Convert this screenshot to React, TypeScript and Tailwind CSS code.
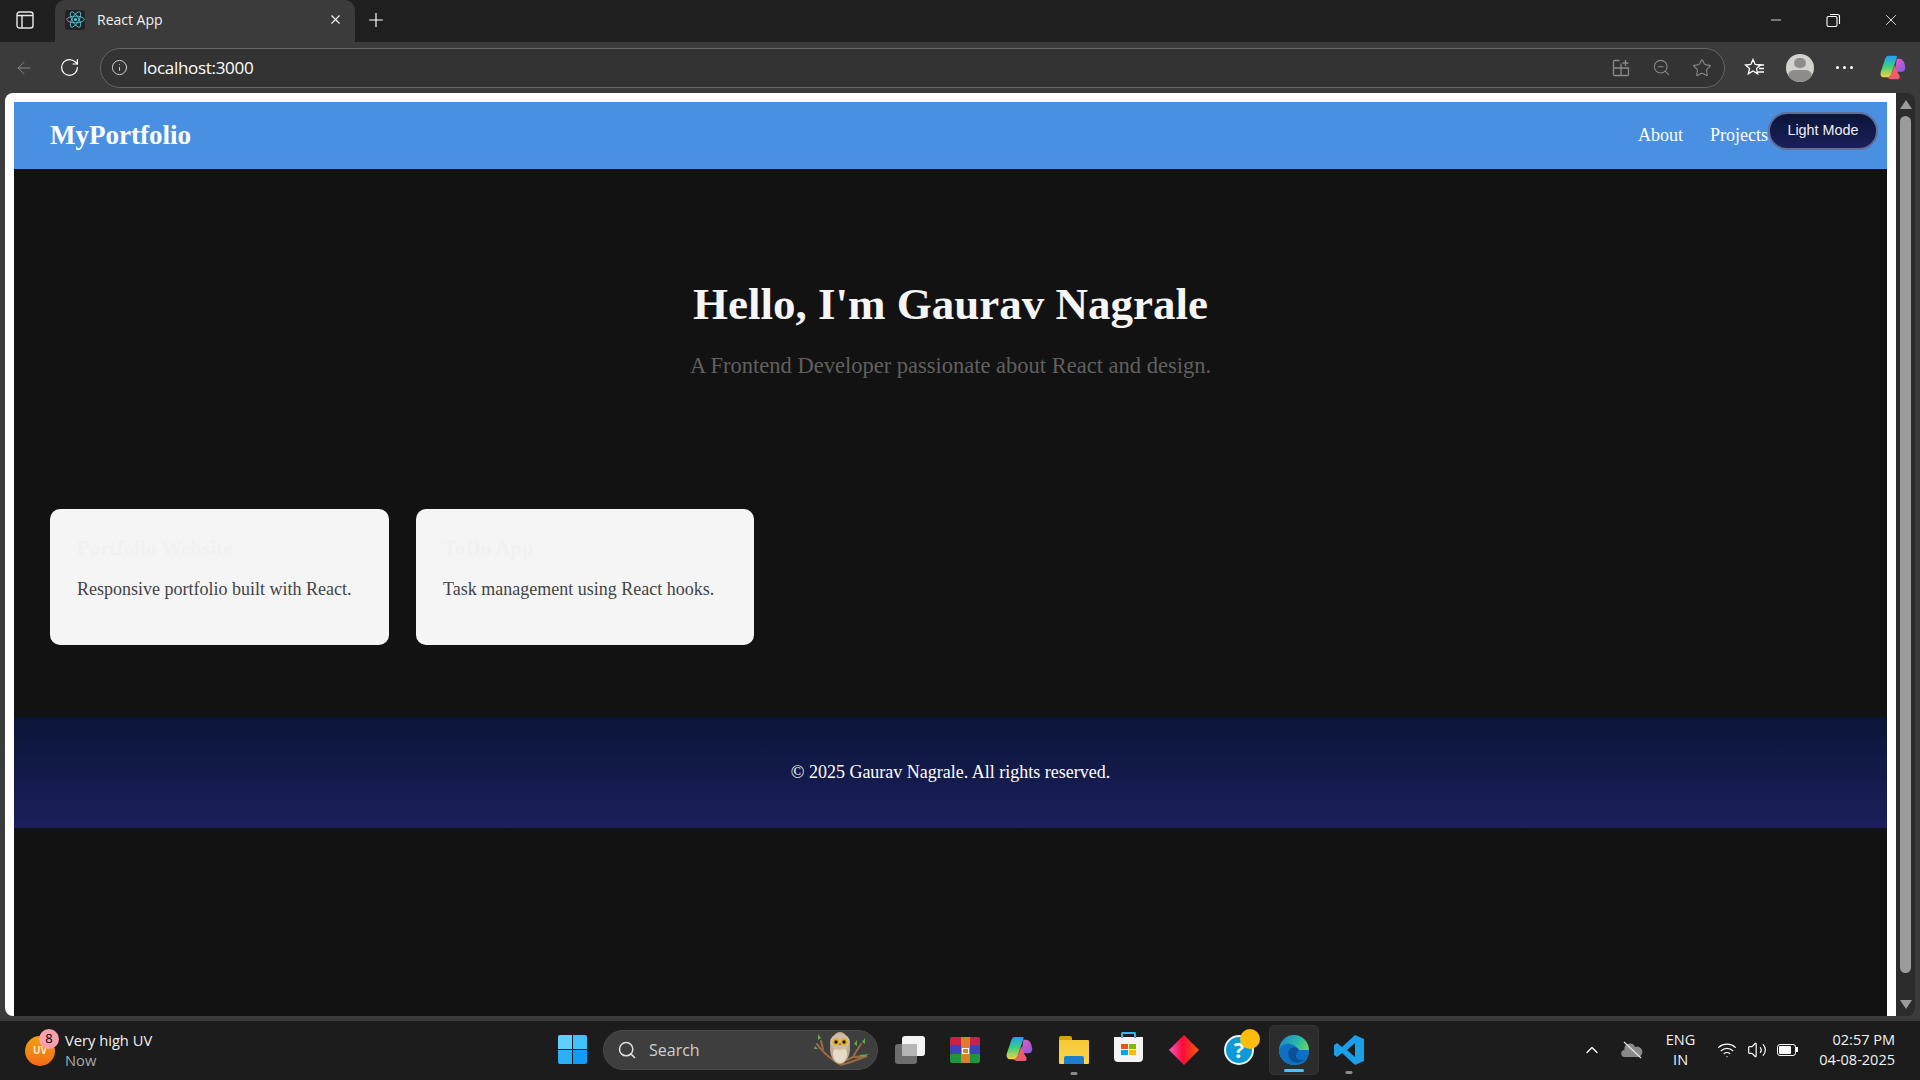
import React from "react";
import { Plus, X, ArrowLeft, RotateCw, Info, ZoomOut, Star, Minus, Search, ChevronUp, Wifi, Volume2 } from "lucide-react";

const ReactLogo = () => (
  <div className="flex items-center justify-center rounded-[3px] bg-[#222222] w-[20px] h-[20px] shrink-0">
    <svg width="19" height="19" viewBox="-12 -12 24 24" fill="none" stroke="#58c4dc" strokeWidth="1.1">
      <circle r="2" fill="#58c4dc" stroke="none" />
      <ellipse rx="11" ry="4.2" />
      <ellipse rx="11" ry="4.2" transform="rotate(60)" />
      <ellipse rx="11" ry="4.2" transform="rotate(120)" />
    </svg>
  </div>
);

const Copilot = ({ size, id }: { size: number; id: string }) => (
  <svg width={size} height={size} viewBox="0 0 30 30">
    <defs>
      <linearGradient id={`${id}a`} x1="0.3" y1="0" x2="0.3" y2="1">
        <stop offset="0" stopColor="#1f9cf5" />
        <stop offset="0.5" stopColor="#3fd17c" />
        <stop offset="1" stopColor="#f7d23e" />
      </linearGradient>
      <linearGradient id={`${id}b`} x1="0.2" y1="0" x2="1" y2="1">
        <stop offset="0" stopColor="#e45ac4" />
        <stop offset="1" stopColor="#7d5be0" />
      </linearGradient>
      <linearGradient id={`${id}c`} x1="0" y1="0" x2="1" y2="1">
        <stop offset="0" stopColor="#f0743a" />
        <stop offset="1" stopColor="#ef4f86" />
      </linearGradient>
    </defs>
    <path d="M10 2h8c2 0 1 2 .4 4L13 22c-1 2-2 3-4 3H5c-3 0-4-3-3-6L6 7c1-3 2-5 4-5z" fill={`url(#${id}a)`} />
    <path d="M19 5h3c3 0 5 3 6 8 .7 4-1 6-4 6h-7z" fill={`url(#${id}b)`} />
    <path d="M13 22l4-10c1 5 3 8 5 11 1 2 0 4-2 4h-7c-2 0-3-1-4-2 2 0 3-1 4-3z" fill={`url(#${id}c)`} />
  </svg>
);

const Browser = () => (
  <>
    {/* tab strip */}
    <div className="h-[42px] bg-[#1f1f1f] flex items-end shrink-0">
      <div className="w-[55px] h-[42px] flex items-center pl-[16px] pb-[2px]">
        <svg width="18" height="18" viewBox="0 0 18 18" fill="none" stroke="#e8e8e8" strokeWidth="1.4">
          <rect x="1" y="1" width="16" height="16" rx="2.5" />
          <path d="M1 4.5h16M6 4.5V17" />
        </svg>
      </div>
      <div className="w-[300px] h-[42px] bg-[#3b3b3b] rounded-t-[10px] flex items-center pl-[10px] pr-[12px] pb-[3px]">
        <ReactLogo />
        <span className="ml-[12px] text-[14px] text-[#f2f2f2] flex-1 font-['Open_Sans',sans-serif]">React App</span>
        <X size={15} className="text-white" strokeWidth={1.7} />
      </div>
      <div className="w-[42px] h-[42px] flex items-center justify-center pb-[3px] text-white">
        <Plus size={22} strokeWidth={1.3} />
      </div>
      <div className="flex-1" />
      <div className="flex items-center h-[42px] text-white pb-[2px]">
        <Minus size={16} strokeWidth={1.2} className="mr-[42px]" />
        <svg width="15" height="15" viewBox="0 0 15 15" fill="none" stroke="#ffffff" strokeWidth="1.1" className="mr-[41px]">
          <rect x="1" y="3.5" width="10" height="10" rx="1.5" />
          <path d="M4 1.5h7.5c1 0 2 1 2 2V11" />
        </svg>
        <X size={18} strokeWidth={1.1} className="mr-[20px]" />
      </div>
    </div>
    {/* toolbar */}
    <div className="h-[51px] bg-[#3b3b3b] flex items-center shrink-0">
      <ArrowLeft size={20} strokeWidth={1.2} className="ml-[14px] text-[#8a8a8a]" />
      <RotateCw size={21} strokeWidth={1.4} className="ml-[25px] text-white" />
      <div className="ml-[20px] w-[1625px] h-[40px] rounded-full border border-[#666666] bg-[#333333] flex items-center">
        <Info size={17} strokeWidth={1.3} className="ml-[10px] text-[#dddddd]" />
        <span className="ml-[15px] text-[17px] text-white font-['Open_Sans',sans-serif] tracking-[-0.3px]">localhost:3000</span>
        <div className="flex-1" />
        <svg width="18" height="18" viewBox="0 0 18 18" fill="none" stroke="#8a8a8a" strokeWidth="1.3" className="mr-[22px]">
          <path d="M7.5 1.5H2.5a1 1 0 0 0-1 1v13a1 1 0 0 0 1 1h13a1 1 0 0 0 1-1V9H1.5M9 16.5V4.5M13.5 1v6M10.5 4h6" />
        </svg>
        <ZoomOut size={19} strokeWidth={1.3} className="mr-[21px] text-[#8a8a8a]" />
        <Star size={20} strokeWidth={1.3} className="mr-[12px] text-[#8a8a8a]" />
      </div>
      <svg width="22" height="20" viewBox="0 0 22 20" fill="none" stroke="#ffffff" strokeWidth="1.3" className="ml-[19px]">
        <path d="M9 1.5l2.2 5 5.3.5-4 3.6 1.2 5.3L9 13l-4.7 2.9 1.2-5.3-4-3.6 5.3-.5z" />
        <path d="M14 7h6M15 10.5h5M14 14h6" />
      </svg>
      <div className="ml-[20px] w-[28px] h-[28px] rounded-full bg-[#d3d2cf] overflow-hidden flex flex-col items-center">
        <div className="mt-[4px] w-[12px] h-[12px] rounded-full bg-[#8f8d8a]" />
        <div className="mt-[2px] w-[24px] h-[14px] rounded-full bg-[#8f8d8a]" />
      </div>
      <div className="ml-[22px] flex gap-[4px]">
        <div className="w-[3px] h-[3px] rounded-full bg-white" />
        <div className="w-[3px] h-[3px] rounded-full bg-white" />
        <div className="w-[3px] h-[3px] rounded-full bg-white" />
      </div>
      <div className="ml-[26px]">
        <Copilot size={28} id="cpTop" />
      </div>
    </div>
  </>
);

const Card = ({ title, text, w }: { title: string; text: string; w: string }) => (
  <div className={`${w} h-[136px] bg-[#f5f5f5] rounded-[10px] px-[27px] pt-[26px]`}>
    <h3 className="text-[21px] font-bold text-[#f1f1f1] leading-[27px]">{title}</h3>
    <p className="mt-[16px] text-[18px] text-[#444444] leading-[23px]">{text}</p>
  </div>
);

const Page = () => (
  <div className="flex-1 flex min-h-0 bg-[#3b3b3b]">
    <div className="ml-[5px] w-[1891px] bg-white rounded-tl-[8px] rounded-bl-[8px] pl-[9px] pr-[9px] pt-[9px] overflow-hidden relative flex flex-col">
      <div className="flex-1 bg-[#121212] font-['Liberation_Serif',serif] flex flex-col">
        <nav className="h-[67px] bg-[#4a90e2] flex items-center justify-between pl-[36px] pr-[119px] shrink-0">
          <span className="text-[27px] font-bold text-white">MyPortfolio</span>
          <div className="flex gap-[27px] text-[18px] text-white">
            <span>About</span>
            <span>Projects</span>
          </div>
        </nav>
        <section className="h-[318px] pt-[105px] text-center shrink-0">
          <h1 className="text-[45px] font-bold text-[#f5f5f5] leading-[60px]">Hello, I'm Gaurav Nagrale</h1>
          <p className="mt-[17px] text-[22.5px] text-[#606060] leading-[29px]">A Frontend Developer passionate about React and design.</p>
        </section>
        <section className="flex gap-[27px] pl-[36px] pt-[22px] h-[230px] shrink-0">
          <Card w="w-[339px]" title="Portfolio Website" text="Responsive portfolio built with React." />
          <Card w="w-[338px]" title="ToDo App" text="Task management using React hooks." />
        </section>
        <footer className="h-[111px] bg-gradient-to-b from-[#0a1538] to-[#1c1f5c] flex items-center justify-center text-[18px] text-white shrink-0">
          © 2025 Gaurav Nagrale. All rights reserved.
        </footer>
      </div>
      <button className="absolute top-[19px] right-[18px] w-[110px] h-[38px] rounded-full border-2 border-[#5f6f95] bg-gradient-to-b from-[#0a1538] to-[#1c1f5c] text-[#f0f0f0] text-[14.4px] font-['Liberation_Sans',sans-serif]">
        Light Mode
      </button>
    </div>
    <div className="w-[19px] flex flex-col items-center bg-[#2c2c2c] rounded-tr-[8px] rounded-br-[8px]">
      <div className="mt-[7px] w-0 h-0 border-l-[6px] border-r-[6px] border-b-[9px] border-l-transparent border-r-transparent border-b-[#9b9b9b]" />
      <div className="mt-[7px] w-[11px] flex-1 rounded-full bg-[#9b9b9b]" />
      <div className="mt-[27px] mb-[7px] w-0 h-0 border-l-[6px] border-r-[6px] border-t-[9px] border-l-transparent border-r-transparent border-t-[#9b9b9b]" />
    </div>
  </div>
);

const Owl = () => (
  <svg width="58" height="36" viewBox="0 0 58 36">
    <path d="M6 12c4 6 10 12 19 18l5 3 10-3 16-6-14 1-6 3M10 9l2 8M50 12l-7 11" fill="none" stroke="#9a6a42" strokeWidth="2" strokeLinecap="round" />
    <path d="M4 14l3 3-4 0zM7 2l3 4-3 2zM51 10l3-4 0 6zM43 12l3-4 0 6zM48 23l10 -1-6 3z" fill="#6aa84f" />
    <ellipse cx="29" cy="16" rx="10" ry="16" fill="#c4ab95" />
    <ellipse cx="29" cy="22" rx="7" ry="9" fill="#e8dbc6" />
    <ellipse cx="29" cy="10" rx="10" ry="8" fill="#cdbba5" />
    <circle cx="25" cy="10" r="3.6" fill="#e4b021" />
    <circle cx="33" cy="10" r="3.6" fill="#e4b021" />
    <circle cx="25" cy="10" r="1.7" fill="#1b1610" />
    <circle cx="33" cy="10" r="1.7" fill="#1b1610" />
    <path d="M29 11l-1.2 2h2.4z" fill="#7a5a3c" />
  </svg>
);

const WinRar = () => (
  <div className="relative w-[30px] h-[26px] rounded-[2px] overflow-hidden flex flex-col">
    <div className="flex-1 bg-[#c4224f]" />
    <div className="flex-1 bg-[#3b45b8]" />
    <div className="flex-1 bg-[#1e9640]" />
    <div className="absolute left-[11px] top-0 w-[9px] h-full bg-[#d9812a]" />
    <div className="absolute left-[12px] top-[11px] w-[7px] h-[6px] border border-white" />
  </div>
);

const Taskbar = () => (
  <div className="h-[64px] shrink-0 bg-[#1c1c1c] flex items-center border-t-[5px] border-[#3b3b3b] pb-[2px] font-['Open_Sans',sans-serif] relative">
    {/* weather */}
    <div className="w-[558px] flex items-center pl-[25px] shrink-0">
      <div className="relative w-[30px] h-[30px] mt-[2px] rounded-full bg-gradient-to-b from-[#f0a010] to-[#f26a18] flex items-center justify-center text-[10px] font-bold text-[#ffe9c0]">
        UV
        <div className="absolute -top-[7px] left-[14px] w-[20px] h-[20px] rounded-full bg-[#f8a0ac] flex items-center justify-center text-[13px] font-normal text-black">8</div>
      </div>
      <div className="ml-[10px] flex flex-col leading-[20px]">
        <span className="text-[14.7px] text-[#f2f2f2]">Very high UV</span>
        <span className="text-[14.7px] text-[#a8a8a8]">Now</span>
      </div>
    </div>
    {/* centre apps */}
    <div className="grid grid-cols-2 gap-[1px] w-[29px] h-[29px] shrink-0">
      <div className="bg-[#5fd0fb] rounded-tl-[2px]" />
      <div className="bg-[#3fc3fd] rounded-tr-[2px]" />
      <div className="bg-[#2bb0f5] rounded-bl-[2px]" />
      <div className="bg-[#129cf5] rounded-br-[2px]" />
    </div>
    <div className="ml-[16px] w-[275px] h-[40px] rounded-full bg-[#3e3e3e] border border-[#4a4a4a] flex items-center shrink-0">
      <Search size={20} strokeWidth={1.8} className="ml-[13px] text-[#e0e0e0]" />
      <span className="ml-[12px] text-[16px] text-[#cfcfcf]">Search</span>
      <div className="flex-1" />
      <div className="mr-[8px]"><Owl /></div>
    </div>
    <div className="relative ml-[17px] w-[30px] h-[28px] shrink-0">
      <div className="absolute left-0 top-[8px] w-[22px] h-[20px] rounded-[3px] bg-[#6e6e6e]" />
      <div className="absolute left-[7px] top-0 w-[23px] h-[20px] rounded-[3px] bg-[#f4f4f4]" />
      <div className="absolute left-[7px] top-[8px] w-[15px] h-[12px] rounded-[1px] bg-[#b5b5b5]" />
    </div>
    <div className="ml-[25px] shrink-0"><WinRar /></div>
    <div className="ml-[25px] shrink-0"><Copilot size={29} id="cpBar" /></div>
    <div className="relative ml-[25px] w-[30px] h-[28px] shrink-0">
      <div className="absolute left-0 top-0 w-[13px] h-[6px] rounded-t-[2px] bg-[#d9a108]" />
      <div className="absolute left-0 top-[4px] w-full h-[24px] bg-gradient-to-b from-[#f7c935] to-[#fbd34d] rounded-[1px]" />
      <div className="absolute left-[5px] bottom-0 w-[20px] h-[8px] rounded-t-[2px] bg-[#1b7fcc]" />
      <div className="absolute left-1/2 -translate-x-1/2 -bottom-[11px] w-[7px] h-[3px] rounded-full bg-[#8a8a8a]" />
    </div>
    <div className="relative ml-[25px] w-[29px] h-[25px] rounded-b-[4px] bg-[#f4f4f4] grid grid-cols-2 gap-[1px] p-[7px] shrink-0">
      <div className="absolute -top-[5px] left-[7px] w-[15px] h-[6px] border-2 border-b-0 border-[#35b4e8] rounded-t-[2px]" />
      <div className="bg-[#f25022]" />
      <div className="bg-[#7fba00]" />
      <div className="bg-[#00a4ef]" />
      <div className="bg-[#ffb900]" />
    </div>
    <div className="ml-[26px] w-[30px] shrink-0">
      <svg width="30" height="30" viewBox="0 0 30 30">
        <defs>
          <linearGradient id="dia" x1="0" y1="0" x2="1" y2="0">
            <stop offset="0" stopColor="#f45cc0" />
            <stop offset="0.45" stopColor="#fa0a3c" />
            <stop offset="1" stopColor="#fa5a00" />
          </linearGradient>
        </defs>
        <path d="M15 0l15 15-15 15L0 15z" fill="url(#dia)" />
      </svg>
    </div>
    <div className="relative ml-[25px] w-[30px] h-[30px] rounded-full bg-[#0d9ad6] border-2 border-[#e8f4fa] flex items-center justify-center text-white font-bold text-[22px] shrink-0">
      ?
      <div className="absolute -top-[8px] left-[14px] w-[20px] h-[20px] rounded-full bg-[#fdbd0c]" />
    </div>
    <div className="relative ml-[15px] w-[50px] h-[50px] rounded-[5px] bg-[#2c2c2c] border border-[#333333] flex items-center justify-center shrink-0">
      <svg width="30" height="30" viewBox="0 0 30 30">
        <defs>
          <linearGradient id="edg" x1="0" y1="0" x2="1" y2="0.6">
            <stop offset="0" stopColor="#1b7fd1" />
            <stop offset="0.55" stopColor="#27b9a8" />
            <stop offset="1" stopColor="#7cdc4c" />
          </linearGradient>
        </defs>
        <circle cx="15" cy="15" r="15" fill="url(#edg)" />
        <path d="M0 15c2-5 7-7 11-6 5 1 8 4 7 6h12c0 4-1 8-3 11-3 3-8 4-12 4C6 30 0 23 0 15z" fill="#0f6fc0" />
        <path d="M20 15c-1-3-6-4-9-1-3 3-2 9 2 12 3 2 9 2 13-1-5 1-9-1-9-4 0-3 2-5 3-6z" fill="#0b4f94" />
      </svg>
      <div className="absolute bottom-[2px] left-1/2 -translate-x-1/2 w-[20px] h-[3px] rounded-full bg-[#4cc2ff]" />
    </div>
    <div className="relative ml-[15px] w-[30px] h-[30px] shrink-0">
      <svg width="30" height="30" viewBox="0 0 30 30">
        <path d="M21 0l9 4v22l-9 4L8 18l-5 4-3-2v-10l3-2 5 4zM21 8l-8 7 8 7z" fill="#1a9fe8" fillRule="evenodd" />
      </svg>
      <div className="absolute left-1/2 -translate-x-1/2 -bottom-[9px] w-[7px] h-[3px] rounded-full bg-[#8a8a8a]" />
    </div>
    {/* tray */}
    <div className="flex-1" />
    <div className="flex items-center text-white pr-[25px] shrink-0">
      <ChevronUp size={20} strokeWidth={1.6} />
      <svg width="22" height="18" viewBox="0 0 22 18" className="ml-[19px]">
        <path d="M4 16a3.5 3.5 0 0 1-.5-7A5.5 5.5 0 0 1 14 6a4.5 4.5 0 0 1 4 10z" fill="#8a8a8a" />
        <path d="M3 1l17 16" stroke="#e8e8e8" strokeWidth="1.2" />
      </svg>
      <div className="ml-[23px] flex flex-col items-center text-[14.5px] leading-[20px] text-[#f2f2f2]">
        <span>ENG</span>
        <span>IN</span>
      </div>
      <Wifi size={20} strokeWidth={1.4} className="ml-[22px]" />
      <Volume2 size={20} strokeWidth={1.4} className="ml-[10px]" />
      <div className="ml-[10px] w-[19px] h-[12px] rounded-[3px] border border-white p-[1px] relative">
        <div className="w-[12px] h-full rounded-[1px] bg-white" />
        <div className="absolute -right-[3px] top-[2px] w-[2px] h-[5px] bg-white" />
      </div>
      <div className="ml-[23px] flex flex-col items-end text-[14.5px] leading-[20px] text-[#f2f2f2]">
        <span>02:57 PM</span>
        <span>04-08-2025</span>
      </div>
    </div>
  </div>
);

export default function App() {
  return (
    <div className="w-[1920px] h-[1080px] overflow-hidden flex flex-col bg-[#1c1c1c]">
      <Browser />
      <Page />
      <Taskbar />
    </div>
  );
}
